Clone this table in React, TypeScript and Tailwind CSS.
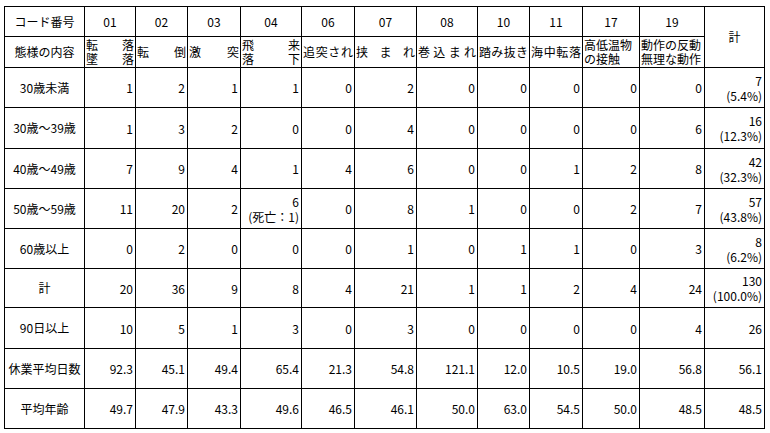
import React from "react"

const cols = ["01", "02", "03", "04", "06", "07", "08", "10", "11", "17", "19"]

type Cell = string | [string, string]

const rows: { label: string; cells: Cell[]; total: Cell }[] = [
  { label: "30歳未満", cells: ["1", "2", "1", "1", "0", "2", "0", "0", "0", "0", "0"], total: ["7", "(5.4%)"] },
  { label: "30歳～39歳", cells: ["1", "3", "2", "0", "0", "4", "0", "0", "0", "0", "6"], total: ["16", "(12.3%)"] },
  { label: "40歳～49歳", cells: ["7", "9", "4", "1", "4", "6", "0", "0", "1", "2", "8"], total: ["42", "(32.3%)"] },
  { label: "50歳～59歳", cells: ["11", "20", "2", ["6", "(死亡：1)"], "0", "8", "1", "0", "0", "2", "7"], total: ["57", "(43.8%)"] },
  { label: "60歳以上", cells: ["0", "2", "0", "0", "0", "1", "0", "1", "1", "0", "3"], total: ["8", "(6.2%)"] },
  { label: "計", cells: ["20", "36", "9", "8", "4", "21", "1", "1", "2", "4", "24"], total: ["130", "(100.0%)"] },
  { label: "90日以上", cells: ["10", "5", "1", "3", "0", "3", "0", "0", "0", "0", "4"], total: "26" },
  { label: "休業平均日数", cells: ["92.3", "45.1", "49.4", "65.4", "21.3", "54.8", "121.1", "12.0", "10.5", "19.0", "56.8"], total: "56.1" },
  { label: "平均年齢", cells: ["49.7", "47.9", "43.3", "49.6", "46.5", "46.1", "50.0", "63.0", "54.5", "50.0", "48.5"], total: "48.5" },
]

// characters spread across the cell width, one line per array entry
function Spread({ lines }: { lines: string[] }) {
  return (
    <div className="flex h-full w-full flex-col justify-center px-px leading-[14px]">
      {lines.map((l, i) => (
        <div key={i} className="flex h-[14px] justify-between">
          {l.split("").map((c, j) => (
            <span key={j}>{c}</span>
          ))}
        </div>
      ))}
    </div>
  )
}

function Left({ lines }: { lines: string[] }) {
  return (
    <div className="flex h-full w-full flex-col justify-center px-px leading-[14px]">
      {lines.map((l, i) => (
        <div key={i} className="h-[14px] whitespace-nowrap">{l}</div>
      ))}
    </div>
  )
}

function Num({ v }: { v: Cell }) {
  return (
    <div className="flex h-full flex-col items-end justify-center bg-white pr-[2px] leading-[15px]">
      {typeof v === "string" ? <span>{v}</span> : v.map((s, i) => <span key={i} className="whitespace-nowrap">{s}</span>)}
    </div>
  )
}

export default function App() {
  return (
    <div className="min-h-screen bg-white pl-[4px] pt-[6px] text-[12px] text-black" style={{ fontFamily: '"Noto Sans CJK JP", "Noto Sans", sans-serif' }}>
      <div className="grid w-fit grid-cols-[79px_50px_51px_52px_60px_52px_61px_60px_51px_52px_56px_64px_59px] grid-rows-[29px_30px_39px_40px_39px_39px_39px_38px_40px_39px_39px] gap-px bg-black p-px">
        {/* header row 1 */}
        <div className="flex items-center justify-center bg-white">コード番号</div>
        {cols.map(c => (
          <div key={c} className="flex items-center justify-center bg-white">{c}</div>
        ))}
        <div className="row-span-2 flex items-center justify-center bg-white">計</div>

        {/* header row 2 */}
        <div className="flex items-center justify-center bg-white">態様の内容</div>
        <div className="bg-white"><Spread lines={["転落", "墜落"]} /></div>
        <div className="bg-white"><Spread lines={["転倒"]} /></div>
        <div className="bg-white"><Spread lines={["激突"]} /></div>
        <div className="bg-white"><Spread lines={["飛来", "落下"]} /></div>
        <div className="bg-white"><Spread lines={["追突され"]} /></div>
        <div className="bg-white"><Spread lines={["挟まれ"]} /></div>
        <div className="bg-white"><Spread lines={["巻込まれ"]} /></div>
        <div className="bg-white"><Spread lines={["踏み抜き"]} /></div>
        <div className="bg-white"><Spread lines={["海中転落"]} /></div>
        <div className="bg-white"><Left lines={["高低温物", "の接触"]} /></div>
        <div className="bg-white"><Left lines={["動作の反動", "無理な動作"]} /></div>

        {rows.map(r => (
          <React.Fragment key={r.label}>
            <div className="flex items-center justify-center whitespace-nowrap bg-white">{r.label}</div>
            {r.cells.map((v, i) => (
              <Num key={i} v={v} />
            ))}
            <Num v={r.total} />
          </React.Fragment>
        ))}
      </div>
    </div>
  )
}
